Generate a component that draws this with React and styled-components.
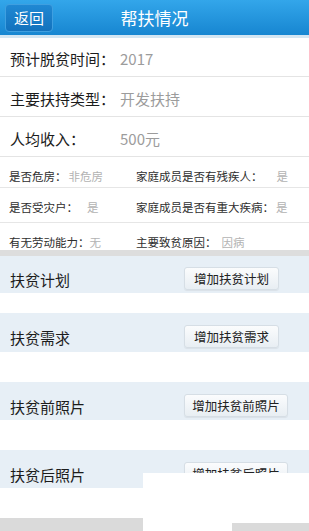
import React from "react";
import styled, { createGlobalStyle } from "styled-components";

const GlobalStyle = createGlobalStyle`
  html, body { margin: 0; padding: 0; background: #ffffff; overflow: hidden; }
  body { font-family: "Noto Sans CJK SC", "Noto Sans", sans-serif; }
`;

const Page = styled.div`
  position: relative;
  width: 309px;
  height: 531px;
  overflow: hidden;
  display: flex;
  flex-direction: column;
  background: #ffffff;
`;

const Header = styled.header`
  height: 35px;
  flex: none;
  display: grid;
  grid-template-columns: 1fr auto 1fr;
  align-items: center;
  padding: 0 5px;
  background: linear-gradient(#33a6ea, #1786d1);
`;

const HeaderEdge = styled.div`
  height: 3px;
  flex: none;
  background: #d3e6f3;
`;

const BackButton = styled.button`
  justify-self: start;
  width: 48px;
  height: 28px;
  margin-top: 1px;
  padding: 0;
  border: 1px solid #3f9fe0;
  border-radius: 4px;
  background: linear-gradient(#1f88d3, #1272bd);
  color: #ffffff;
  font-family: inherit;
  font-size: 15px;
  line-height: 26px;
`;

const Title = styled.h1`
  margin: 0;
  color: #ffffff;
  font-size: 17px;
  font-weight: 400;
  line-height: 35px;
`;

const InfoRow = styled.div`
  height: ${(p) => p.$h}px;
  flex: none;
  box-sizing: border-box;
  display: grid;
  grid-template-columns: 110px 1fr;
  align-items: center;
  padding: 3px 0 0 10px;
  border-bottom: 1px solid #e4e4e4;
  font-size: 15px;
`;

const Label = styled.span`
  color: #1c1c1c;
  white-space: nowrap;
`;

const Value = styled.span`
  color: #9c9c9c;
  white-space: nowrap;
`;

const SmallRow = styled.div`
  height: ${(p) => p.$h}px;
  flex: none;
  box-sizing: border-box;
  display: grid;
  grid-template-columns: 127px 1fr;
  align-items: start;
  padding: 12px 0 0 9px;
  border-bottom: ${(p) => (p.$last ? "none" : "1px solid #e6e6e6")};
  font-size: 11.5px;
  line-height: 14px;
`;

const Pair = styled.div`
  display: flex;
  white-space: nowrap;
`;

const SmallLabel = styled.span`
  color: #2e2e2e;
`;

const SmallValue = styled.span`
  color: #b2b2b2;
  margin-left: ${(p) => p.$gap}px;
`;

const Divider = styled.div`
  height: 6px;
  flex: none;
  background: #dddddd;
`;

const SectionBar = styled.div`
  height: ${(p) => p.$h}px;
  flex: none;
  box-sizing: border-box;
  display: flex;
  align-items: center;
  justify-content: space-between;
  padding: 8px 21px 0 10px;
  background: #e7eff6;
`;

const SectionTitle = styled.span`
  color: #1c1c1c;
  font-size: 15px;
  margin-top: 2px;
`;

const AddButton = styled.button`
  width: ${(p) => p.$w}px;
  height: 23px;
  margin-right: ${(p) => p.$mr}px;
  padding: 0;
  border: 1px solid #d6dee5;
  border-radius: 3px;
  background: linear-gradient(#fbfcfd, #e8eef3);
  box-shadow: 0 1px 1px rgba(0, 0, 0, 0.06);
  color: #222222;
  font-family: inherit;
  font-size: 12.5px;
  line-height: 21px;
`;

const Spacer = styled.div`
  height: ${(p) => p.$h}px;
  flex: none;
  background: #ffffff;
`;

const Footer = styled.div`
  flex: 1;
  background: #dadada;
`;

const Patch = styled.div`
  position: absolute;
  background: #ffffff;
  left: ${(p) => p.$x}px;
  top: ${(p) => p.$y}px;
  width: ${(p) => p.$w}px;
  height: ${(p) => p.$hh}px;
`;

const mainRows = [
  { label: "预计脱贫时间：", value: "2017", h: 39 },
  { label: "主要扶持类型：", value: "开发扶持", h: 40 },
  { label: "人均收入：", value: "500元", h: 40 },
];

const smallRows = [
  {
    h: 31,
    items: [
      { label: "是否危房：", value: "非危房", gap: 2 },
      { label: "家庭成员是否有残疾人：", value: "是", gap: 14 },
    ],
  },
  {
    h: 35,
    items: [
      { label: "是否受灾户：", value: "是", gap: 9 },
      { label: "家庭成员是否有重大疾病：", value: "是", gap: 2 },
    ],
  },
  {
    h: 27,
    items: [
      { label: "有无劳动能力：", value: "无", gap: 0 },
      { label: "主要致贫原因：", value: "因病", gap: 5 },
    ],
  },
];

const sections = [
  { title: "扶贫计划", btn: "增加扶贫计划", bar: 37, after: 20, w: 95, mr: 9 },
  { title: "扶贫需求", btn: "增加扶贫需求", bar: 39, after: 30, w: 95, mr: 9 },
  { title: "扶贫前照片", btn: "增加扶贫前照片", bar: 38, after: 30, w: 104, mr: 0 },
  { title: "扶贫后照片", btn: "增加扶贫后照片", bar: 38, after: 30, w: 104, mr: 0 },
];

export default function App() {
  return (
    <>
      <GlobalStyle />
      <Page>
        <Header>
          <BackButton>返回</BackButton>
          <Title>帮扶情况</Title>
          <span />
        </Header>
        <HeaderEdge />
        {mainRows.map((r) => (
          <InfoRow key={r.label} $h={r.h}>
            <Label>{r.label}</Label>
            <Value>{r.value}</Value>
          </InfoRow>
        ))}
        {smallRows.map((r, i) => (
          <SmallRow key={i} $h={r.h} $last={i === smallRows.length - 1}>
            {r.items.map((it) => (
              <Pair key={it.label}>
                <SmallLabel>{it.label}</SmallLabel>
                <SmallValue $gap={it.gap}>{it.value}</SmallValue>
              </Pair>
            ))}
          </SmallRow>
        ))}
        <Divider />
        {sections.map((s) => (
          <React.Fragment key={s.title}>
            <SectionBar $h={s.bar}>
              <SectionTitle>{s.title}</SectionTitle>
              <AddButton $w={s.w} $mr={s.mr}>{s.btn}</AddButton>
            </SectionBar>
            <Spacer $h={s.after} />
          </React.Fragment>
        ))}
        <Footer />
        <Patch $x={143} $y={473} $w={166} $hh={50} />
        <Patch $x={143} $y={520} $w={89} $hh={11} />
      </Page>
    </>
  );
}
